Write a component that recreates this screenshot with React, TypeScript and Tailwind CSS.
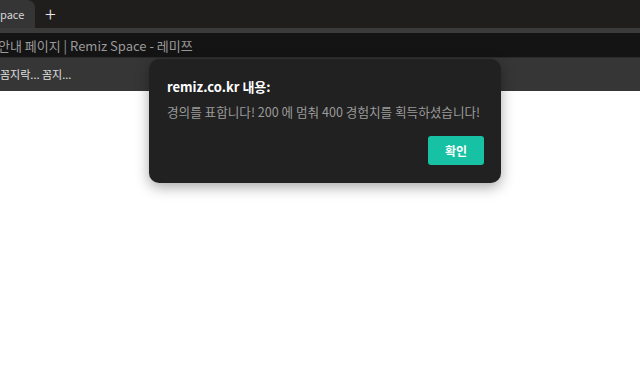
export default function App() {
  const font = { fontFamily: '"Noto Sans CJK KR", "Noto Sans", sans-serif' };
  return (
    <div className="relative w-[640px] h-[378px] bg-white overflow-hidden" style={font}>
      {/* tab strip */}
      <div className="flex h-[28px] bg-[#1f1e1c]">
        <div className="w-[35px] bg-[#353535] rounded-tr-[8px] flex items-center text-[11px] text-[#d6d6d6] leading-none">
          pace
        </div>
        <div className="ml-[10px] flex items-center text-[20px] text-[#e8e8e8] leading-none font-light">+</div>
      </div>
      <div className="h-[5px] bg-[#3b3b3b]" />
      {/* address bar */}
      <div className="h-[24px] bg-[#141414] flex items-center text-[13px] text-[#9a9a9a] leading-none -ml-[2px]">
        안내 페이지 | Remiz Space - 레미쯔
      </div>
      <div className="h-[1px] bg-[#2b2b2b]" />
      {/* bookmarks bar */}
      <div className="h-[33px] bg-[#363636] flex items-center text-[11px] text-[#e0e0e0] leading-none">
        꼼지락... 꼼지...
      </div>

      {/* alert dialog */}
      <div className="absolute left-[149px] top-[59px] w-[352px] h-[124px] bg-[#212121] rounded-[10px] shadow-[0_4px_14px_rgba(0,0,0,0.35)] px-[18px] pt-[18px]">
        <div className="text-[13px] font-bold text-white leading-[20px]">remiz.co.kr 내용:</div>
        <div className="mt-[6px] text-[12.6px] text-[#9b9b9b] leading-[18px] whitespace-nowrap">
          경의를 표합니다! 200 에 멈춰 400 경험치를 획득하셨습니다!
        </div>
        <div className="flex justify-end mt-[15px]">
          <button className="w-[56px] h-[29px] bg-[#17c1a3] rounded-[3px] text-[12px] font-bold text-white -mr-[1px]">
            확인
          </button>
        </div>
      </div>
    </div>
  );
}
